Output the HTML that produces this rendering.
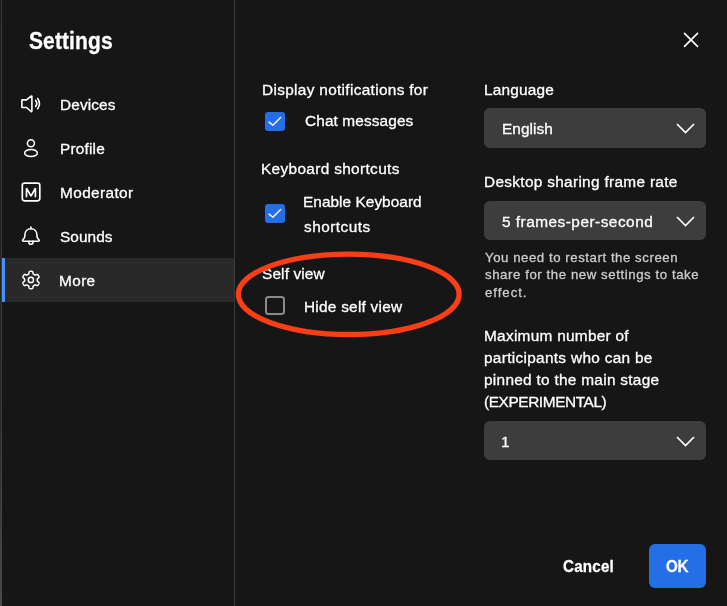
<!DOCTYPE html>
<html><head><meta charset="utf-8">
<style>
*{margin:0;padding:0;box-sizing:border-box}
html,body{width:727px;height:606px;overflow:hidden;background:#161616}
body{position:relative;font-family:"Liberation Sans",sans-serif;color:#fff}
.a{position:absolute;white-space:nowrap;will-change:transform}
.lb0{left:0;top:0;width:1px;height:606px;position:absolute;background:linear-gradient(#1c1b19 0%,#1e1d1c 25%,#262626 66%,#4a4a4a 100%)}
.lb1{left:1px;top:0;width:1px;height:606px;position:absolute;background:linear-gradient(#3a3a3a 0%,#3c3c3c 66%,#4a4a4a 100%)}
.lb2{left:2px;top:0;width:1px;height:606px;position:absolute;background:#161616}
.sep{position:absolute;left:234px;top:0;width:1px;height:606px;background:#3b3b3b}
.sel{position:absolute;left:2px;top:258px;width:232px;height:44px;background:#292929}
.bar{position:absolute;left:2px;top:258px;width:3px;height:44px;background:#4a8ff5}
.cb{position:absolute;width:20px;height:19px;border-radius:3px;background:#246fe5}
.cbu{position:absolute;width:20px;height:19px;border-radius:3.5px;border:2px solid #8a8a8a}
.selb{position:absolute;left:484px;width:222px;height:40px;border-radius:6px;background:#3d3d3d}
</style></head><body>
<div class="lb0"></div><div class="lb1"></div><div class="lb2"></div>
<div class="sel"></div>
<div class="bar"></div>
<div class="sep"></div>
<div class="a" style="left:28.57px;top:30.62px;font-size:21px;line-height:21px;font-weight:700;letter-spacing:0.107px;color:#fff;-webkit-text-stroke:0.25px #fff;transform:scaleY(1.17);transform-origin:0 17.78px">Settings</div>
<svg class="a" style="left:19px;top:92px" width="24" height="24" viewBox="0 0 24 24" fill="none" stroke="#fff" stroke-width="1.6" stroke-linejoin="round" stroke-linecap="round">
<path d="M3.3 7.9H7.5L12.1 4.1C12.5 3.8 12.9 4 12.9 4.5V19.1C12.9 19.6 12.5 19.8 12.1 19.5L7.5 15.5H3.3C3.1 15.5 2.9 15.3 2.9 15.1V8.3C2.9 8.1 3.1 7.9 3.3 7.9Z"/>
<path d="M16.6 8.4C18.1 10.3 18.1 12.6 16.6 14.5"/>
<path d="M18.7 6.5C20.8 9.6 20.8 13.6 18.7 16.7"/>
</svg>
<div class="a" style="left:59.63px;top:96.56px;font-size:15.4px;line-height:15.4px;font-weight:400;letter-spacing:0.128px;color:#fff;-webkit-text-stroke:0.3px #fff">Devices</div>
<svg class="a" style="left:19px;top:136px" width="24" height="24" viewBox="0 0 24 24" fill="none" stroke="#fff" stroke-width="1.5">
<circle cx="11.9" cy="7.2" r="3.5"/>
<ellipse cx="12" cy="17" rx="6.4" ry="3.5"/>
</svg>
<div class="a" style="left:59.63px;top:140.56px;font-size:15.4px;line-height:15.4px;font-weight:400;letter-spacing:0.193px;color:#fff;-webkit-text-stroke:0.3px #fff">Profile</div>
<svg class="a" style="left:19px;top:180px" width="24" height="24" viewBox="0 0 24 24" fill="none" stroke="#fff">
<rect x="3.3" y="3.1" width="17.5" height="17.7" rx="2.2" stroke-width="1.7"/>
<path d="M7.5 17.3V8.2L12 16.2L16.4 8.2V17.3" stroke-width="1.7" stroke-linejoin="bevel"/>
</svg>
<div class="a" style="left:59.63px;top:184.56px;font-size:15.4px;line-height:15.4px;font-weight:400;letter-spacing:0.374px;color:#fff;-webkit-text-stroke:0.3px #fff">Moderator</div>
<svg class="a" style="left:19px;top:224px" width="24" height="24" viewBox="0 0 24 24" fill="none" stroke="#fff" stroke-width="1.6" stroke-linejoin="round" stroke-linecap="round">
<path d="M11.9 3V4.6"/>
<path d="M5.8 11.2C5.8 7.3 8.5 4.7 11.9 4.7C15.3 4.7 18 7.3 18 11.2V12.6C18 13.8 18.7 14.6 19.7 15.5C20.7 16.4 20.5 17.2 19.3 17.2H4.5C3.3 17.2 3.1 16.4 4.1 15.5C5.1 14.6 5.8 13.8 5.8 12.6Z"/>
<path d="M9.8 17.4V18.2C9.8 19.4 10.7 20.2 11.9 20.2C13.1 20.2 14 19.4 14 18.2V17.4"/>
</svg>
<div class="a" style="left:59.84px;top:228.56px;font-size:15.4px;line-height:15.4px;font-weight:400;letter-spacing:0.055px;color:#fff;-webkit-text-stroke:0.3px #fff">Sounds</div>
<svg class="a" style="left:19px;top:268px" width="24" height="24" viewBox="0 0 24 24" fill="none" stroke="#fff" stroke-width="1.5" stroke-linejoin="round">
<path d="M18.26 12.00L18.26 11.78L18.26 11.56L18.26 11.34L18.29 11.11L18.39 10.87L18.63 10.58L19.07 10.22L19.57 9.81L19.89 9.42L19.99 9.07L19.96 8.76L19.88 8.47L19.76 8.19L19.63 7.92L19.48 7.65L19.33 7.39L19.16 7.14L18.97 6.90L18.76 6.68L18.50 6.50L18.15 6.41L17.66 6.49L17.05 6.72L16.52 6.93L16.15 6.99L15.89 6.95L15.68 6.87L15.49 6.76L15.30 6.65L15.10 6.54L14.91 6.43L14.72 6.32L14.53 6.20L14.35 6.06L14.19 5.86L14.06 5.51L13.97 4.94L13.87 4.30L13.69 3.83L13.44 3.58L13.15 3.44L12.86 3.37L12.56 3.33L12.25 3.31L11.95 3.30L11.65 3.31L11.34 3.33L11.04 3.37L10.75 3.44L10.46 3.58L10.21 3.83L10.03 4.30L9.93 4.94L9.84 5.51L9.71 5.86L9.55 6.06L9.37 6.20L9.18 6.32L8.99 6.43L8.80 6.54L8.60 6.65L8.41 6.76L8.22 6.87L8.01 6.95L7.75 6.99L7.38 6.93L6.85 6.72L6.24 6.49L5.75 6.41L5.40 6.50L5.14 6.68L4.93 6.90L4.74 7.14L4.57 7.39L4.42 7.65L4.27 7.92L4.14 8.19L4.02 8.47L3.94 8.76L3.91 9.07L4.01 9.42L4.33 9.81L4.83 10.22L5.27 10.58L5.51 10.87L5.61 11.11L5.64 11.34L5.64 11.56L5.64 11.78L5.64 12.00L5.64 12.22L5.64 12.44L5.64 12.66L5.61 12.89L5.51 13.13L5.27 13.42L4.83 13.78L4.33 14.19L4.01 14.58L3.91 14.93L3.94 15.24L4.02 15.53L4.14 15.81L4.27 16.08L4.42 16.35L4.57 16.61L4.74 16.86L4.93 17.10L5.14 17.32L5.40 17.50L5.75 17.59L6.24 17.51L6.85 17.28L7.38 17.07L7.75 17.01L8.01 17.05L8.22 17.13L8.41 17.24L8.60 17.35L8.80 17.46L8.99 17.57L9.18 17.68L9.37 17.80L9.55 17.94L9.71 18.14L9.84 18.49L9.93 19.06L10.03 19.70L10.21 20.17L10.46 20.42L10.75 20.56L11.04 20.63L11.34 20.67L11.65 20.69L11.95 20.70L12.25 20.69L12.56 20.67L12.86 20.63L13.15 20.56L13.44 20.42L13.69 20.17L13.87 19.70L13.97 19.06L14.06 18.49L14.19 18.14L14.35 17.94L14.53 17.80L14.72 17.68L14.91 17.57L15.10 17.46L15.30 17.35L15.49 17.24L15.68 17.13L15.89 17.05L16.15 17.01L16.52 17.07L17.05 17.28L17.66 17.51L18.15 17.59L18.50 17.50L18.76 17.32L18.97 17.10L19.16 16.86L19.33 16.61L19.48 16.35L19.63 16.08L19.76 15.81L19.88 15.53L19.96 15.24L19.99 14.93L19.89 14.58L19.57 14.19L19.07 13.78L18.63 13.42L18.39 13.13L18.29 12.89L18.26 12.66L18.26 12.44L18.26 12.22Z"/>
<circle cx="11.9" cy="11.9" r="2.6"/>
</svg>
<div class="a" style="left:59.26px;top:272.56px;font-size:15.4px;line-height:15.4px;font-weight:400;letter-spacing:0.373px;color:#fff;-webkit-text-stroke:0.3px #fff">More</div>
<svg class="a" style="left:679px;top:28px" width="24" height="24" viewBox="0 0 24 24" stroke="#fff" stroke-width="1.6" stroke-linecap="round">
<path d="M5.5 5.4L18.5 18.4M18.5 5.4L5.5 18.4"/>
</svg>
<div class="a" style="left:261.67px;top:81.76px;font-size:15.4px;line-height:15.4px;font-weight:400;letter-spacing:0.317px;color:#fff;-webkit-text-stroke:0.3px #fff">Display notifications for</div>
<div class="cb" style="left:265px;top:112px"></div>
<svg class="a" style="left:265px;top:112px" width="20" height="20" viewBox="0 0 20 20" fill="none" stroke="#fff6e8" stroke-width="1.45" stroke-linecap="round" stroke-linejoin="round"><path d="M4.1 10.1L7.9 13.2L15.6 5.5"/></svg>
<div class="a" style="left:305.28px;top:112.96px;font-size:15.4px;line-height:15.4px;font-weight:400;letter-spacing:0.112px;color:#fff;-webkit-text-stroke:0.3px #fff">Chat messages</div>
<div class="a" style="left:261.13px;top:160.96px;font-size:15.4px;line-height:15.4px;font-weight:400;letter-spacing:0.337px;color:#fff;-webkit-text-stroke:0.3px #fff">Keyboard shortcuts</div>
<div class="cb" style="left:264.5px;top:204.3px"></div>
<svg class="a" style="left:264.5px;top:204.3px" width="20" height="20" viewBox="0 0 20 20" fill="none" stroke="#fff6e8" stroke-width="1.45" stroke-linecap="round" stroke-linejoin="round"><path d="M4.1 10.1L7.9 13.2L15.6 5.5"/></svg>
<div class="a" style="left:303.47px;top:193.76px;font-size:15.4px;line-height:15.4px;font-weight:400;letter-spacing:0.040px;color:#fff;-webkit-text-stroke:0.3px #fff">Enable Keyboard</div>
<div class="a" style="left:303.75px;top:219.46px;font-size:15.4px;line-height:15.4px;font-weight:400;letter-spacing:0.474px;color:#fff;-webkit-text-stroke:0.3px #fff">shortcuts</div>
<div class="a" style="left:261.84px;top:265.66px;font-size:15.4px;line-height:15.4px;font-weight:400;letter-spacing:0.131px;color:#fff;-webkit-text-stroke:0.3px #fff">Self view</div>
<div class="cbu" style="left:265px;top:296px"></div>
<div class="a" style="left:304.47px;top:298.66px;font-size:15.4px;line-height:15.4px;font-weight:400;letter-spacing:0.244px;color:#fff;-webkit-text-stroke:0.3px #fff">Hide self view</div>
<div class="a" style="left:484.17px;top:81.66px;font-size:15.4px;line-height:15.4px;font-weight:400;letter-spacing:0.180px;color:#fff;-webkit-text-stroke:0.3px #fff">Language</div>
<div class="selb" style="top:108px;height:39.7px"></div>
<div class="a" style="left:501.85px;top:121.36px;font-size:15.4px;line-height:15.4px;font-weight:400;letter-spacing:0.065px;color:#fff;-webkit-text-stroke:0.3px #fff">English</div>
<svg class="a" style="left:675px;top:118px" width="22" height="22" viewBox="0 0 22 22" fill="none" stroke="#fff" stroke-width="1.6"><path d="M2 6L10.5 14.6L19 6"/></svg>
<div class="a" style="left:484.17px;top:173.56px;font-size:15.4px;line-height:15.4px;font-weight:400;letter-spacing:0.310px;color:#fff;-webkit-text-stroke:0.3px #fff">Desktop sharing frame rate</div>
<div class="selb" style="top:200.8px;height:39.2px"></div>
<div class="a" style="left:502.22px;top:213.66px;font-size:15.4px;line-height:15.4px;font-weight:400;letter-spacing:0.486px;color:#fff;-webkit-text-stroke:0.3px #fff">5 frames-per-second</div>
<svg class="a" style="left:675px;top:210.5px" width="22" height="22" viewBox="0 0 22 22" fill="none" stroke="#fff" stroke-width="1.6"><path d="M2 6L10.5 14.6L19 6"/></svg>
<div class="a" style="left:485.02px;top:250.82px;font-size:13.2px;line-height:13.2px;font-weight:400;letter-spacing:0.563px;color:#cdcdcd;-webkit-text-stroke:0.3px #cdcdcd">You need to restart the screen</div>
<div class="a" style="left:485.19px;top:268.47px;font-size:13.2px;line-height:13.2px;font-weight:400;letter-spacing:0.586px;color:#cdcdcd;-webkit-text-stroke:0.3px #cdcdcd">share for the new settings to take</div>
<div class="a" style="left:484.98px;top:285.52px;font-size:13.2px;line-height:13.2px;font-weight:400;letter-spacing:0.970px;color:#cdcdcd;-webkit-text-stroke:0.3px #cdcdcd">effect.</div>
<div class="a" style="left:484.47px;top:328.26px;font-size:15.4px;line-height:15.4px;font-weight:400;letter-spacing:0.271px;color:#fff;-webkit-text-stroke:0.3px #fff">Maximum number of</div>
<div class="a" style="left:484.24px;top:350.46px;font-size:15.4px;line-height:15.4px;font-weight:400;letter-spacing:0.306px;color:#fff;-webkit-text-stroke:0.3px #fff">participants who can be</div>
<div class="a" style="left:484.24px;top:372.16px;font-size:15.4px;line-height:15.4px;font-weight:400;letter-spacing:0.285px;color:#fff;-webkit-text-stroke:0.3px #fff">pinned to the main stage</div>
<div class="a" style="left:484.31px;top:394.36px;font-size:15.4px;line-height:15.4px;font-weight:400;letter-spacing:-0.406px;color:#fff;-webkit-text-stroke:0.3px #fff">(EXPERIMENTAL)</div>
<div class="selb" style="top:420.8px;height:39.2px"></div>
<div class="a" style="left:501.28px;top:434.16px;font-size:15.4px;line-height:15.4px;font-weight:400;letter-spacing:0.000px;color:#fff;-webkit-text-stroke:0.3px #fff">1</div>
<svg class="a" style="left:675px;top:430.5px" width="22" height="22" viewBox="0 0 22 22" fill="none" stroke="#fff" stroke-width="1.6"><path d="M2 6L10.5 14.6L19 6"/></svg>
<svg class="a" style="left:0;top:0" width="727" height="606"><ellipse cx="348.75" cy="294.3" rx="110.4" ry="40.2" fill="none" stroke="#fa3e16" stroke-width="5.3"/></svg>
<div class="a" style="left:562.85px;top:558.83px;font-size:15.2px;line-height:15.2px;font-weight:700;letter-spacing:0.196px;color:#fff;-webkit-text-stroke:0.25px #fff;transform:scaleY(1.04);transform-origin:0 12.87px">Cancel</div>
<div class="a" style="left:649px;top:544px;width:57px;height:44px;border-radius:6px;background:#246fe5"></div>
<div class="a" style="left:666.41px;top:558.93px;font-size:15.2px;line-height:15.2px;font-weight:700;letter-spacing:-0.400px;color:#fff;-webkit-text-stroke:0.25px #fff;transform:scaleY(1.04);transform-origin:0 12.87px">OK</div>
</body></html>
